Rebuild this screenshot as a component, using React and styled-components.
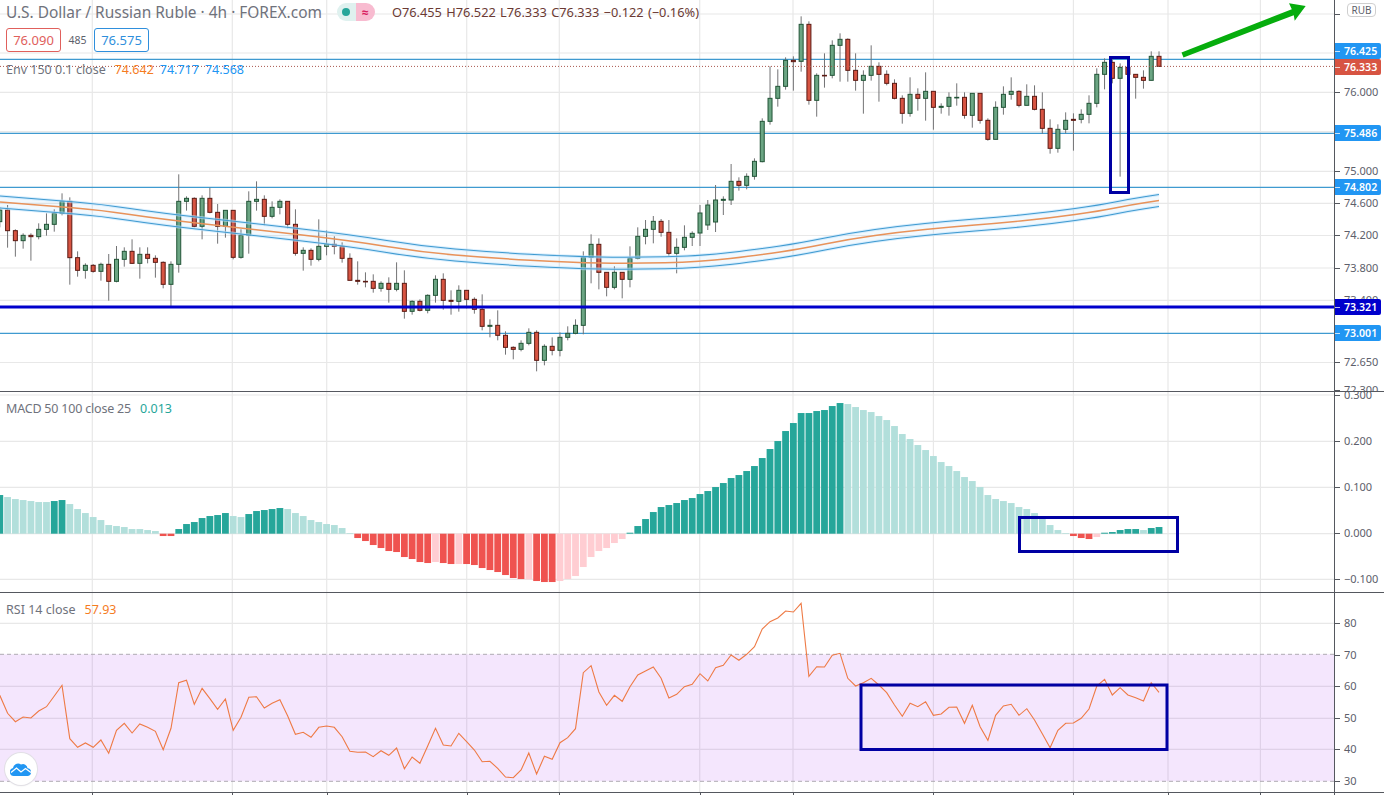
import React from 'react';
import styled, { createGlobalStyle } from 'styled-components';

const CHART_WIDTH = 1334;
const BAR_STEP = 7.78;
const barX = (i) => i * BAR_STEP - 0.2;

const verticalGrid = [92.3, 232.3, 326.7, 466.7, 559.3, 699.7, 793, 933.4, 1073.4, 1168, 1260.4];

// candles: [body top, body bottom, wick top, wick bottom, up], read off at 3x per block
const readCandles = (offset, rows) =>
  rows.map(([top, bottom, wickTop, wickBottom, up]) => ({
    top: offset + top / 3,
    bottom: offset + bottom / 3,
    wickTop: offset + wickTop / 3,
    wickBottom: offset + wickBottom / 3,
    up,
  }));

const candles = [
  ...readCandles(170, [
    [120, 155, 112, 172, 1], [120, 182, 105, 233, 0], [182, 212, 178, 260, 0], [196, 212, 190, 236, 1],
    [196, 200, 190, 272, 0], [178, 200, 160, 208, 1], [163, 178, 130, 197, 1], [130, 163, 118, 185, 1],
    [94, 130, 70, 136, 1], [94, 263, 82, 344, 0], [263, 301, 244, 320, 0], [286, 301, 280, 326, 1],
    [286, 304, 282, 308, 0], [283, 304, 278, 332, 1], [283, 334, 252, 392, 0], [268, 334, 228, 337, 1],
    [244, 268, 232, 290, 1], [244, 280, 208, 282, 0], [253, 280, 232, 326, 1], [253, 265, 232, 280, 0],
    [265, 277, 256, 323, 0], [277, 343, 274, 355, 0], [283, 343, 274, 408, 1], [94, 283, 13, 308, 1],
    [85, 94, 79, 122, 1], [85, 169, 82, 172, 0], [85, 169, 76, 208, 1], [85, 127, 53, 130, 0],
    [127, 169, 102, 221, 0], [121, 169, 121, 203, 1], [121, 262, 121, 268, 0], [196, 262, 178, 266, 1],
    [94, 196, 64, 251, 1], [88, 94, 34, 122, 1], [88, 139, 76, 166, 0], [112, 139, 94, 145, 1],
    [94, 112, 88, 133, 1], [94, 163, 94, 175, 0], [163, 250, 118, 257, 0], [241, 250, 232, 302, 1],
    [241, 268, 235, 287, 0], [229, 268, 148, 274, 1], [223, 229, 181, 256, 1], [223, 229, 199, 253, 0],
    [229, 265, 217, 278, 0],
  ]),
  ...readCandles(220, [
    [115, 181, 100, 181, 0], [181, 184, 124, 194, 0], [184, 185, 157, 202, 0], [184, 205, 163, 218, 0],
    [190, 205, 184, 215, 1], [190, 208, 172, 248, 0], [190, 208, 127, 214, 1], [190, 274, 151, 296, 0],
    [244, 274, 241, 284, 1], [244, 271, 238, 274, 0], [226, 271, 223, 280, 1], [178, 226, 166, 248, 1],
    [178, 241, 160, 269, 0], [241, 244, 211, 284, 0], [211, 244, 196, 275, 1], [211, 238, 211, 265, 0],
    [238, 268, 232, 281, 0], [268, 319, 223, 331, 0], [316, 319, 298, 352, 1], [316, 346, 271, 361, 0],
    [346, 382, 334, 404, 0], [382, 388, 379, 418, 0], [370, 388, 361, 394, 1], [337, 370, 325, 376, 1],
    [337, 421, 331, 454, 0], [379, 421, 373, 436, 1], [379, 391, 352, 406, 0], [352, 391, 337, 409, 1],
    [340, 352, 319, 361, 1], [316, 340, 298, 343, 1], [112, 316, 94, 343, 1], [73, 112, 43, 190, 1],
    [73, 157, 55, 208, 0], [157, 202, 157, 229, 0], [157, 202, 139, 208, 1], [157, 178, 157, 235, 0],
    [115, 178, 79, 202, 1], [49, 115, 22, 118, 1], [28, 49, 0, 73, 1], [4, 28, -12, 70, 1],
    [4, 37, -3, 50, 0], [37, 100, 0, 109, 0], [82, 100, 55, 160, 1], [52, 82, 16, 91, 1],
    [40, 52, 34, 78, 1],
  ]),
  ...readCandles(0, [
    [639, 699, 615, 738, 1], [615, 675, 600, 690, 1], [600, 666, 555, 696, 1],
  ]),
  ...readCandles(10, [
    [568, 571, 559, 615, 1], [514, 570, 462, 585, 1], [514, 526, 502, 542, 0], [499, 526, 490, 538, 1],
    [454, 499, 445, 509, 1], [334, 455, 325, 457, 1], [265, 334, 169, 344, 1], [229, 265, 178, 290, 1],
    [151, 229, 142, 239, 1], [151, 155, 139, 242, 0], [43, 154, 19, 185, 1], [43, 271, 34, 284, 0],
    [196, 271, 190, 320, 1], [196, 197, 130, 233, 0], [106, 196, 91, 205, 1], [88, 106, 70, 215, 1],
    [88, 181, 85, 215, 0], [181, 211, 130, 242, 0], [196, 211, 181, 311, 1], [169, 196, 106, 212, 1],
    [169, 193, 157, 275, 0], [193, 220, 181, 226, 0], [220, 265, 208, 268, 0], [265, 310, 256, 341, 0],
    [253, 310, 202, 320, 1], [253, 265, 235, 302, 0], [244, 265, 187, 332, 1], [244, 292, 244, 359, 0],
    [289, 292, 280, 311, 1], [262, 289, 247, 317, 1], [262, 263, 220, 287, 1], [262, 316, 247, 326, 0],
    [250, 316, 250, 353, 1], [250, 331, 250, 341, 0], [331, 388, 325, 392, 0], [292, 388, 274, 388, 1],
    [253, 292, 229, 314, 1], [244, 253, 202, 269, 1], [244, 286, 241, 292, 0], [259, 286, 223, 286, 1],
    [259, 298, 226, 301, 0], [298, 355, 247, 371, 0], [355, 415, 328, 431, 0], [358, 415, 343, 428, 1],
    [331, 358, 307, 370, 1], [328, 331, 310, 422, 0], [313, 328, 298, 340, 1], [280, 313, 256, 340, 1],
    [193, 280, 175, 292, 1],
  ]),
  ...readCandles(0, [
    [187, 223, 175, 268, 1], [187, 235, 175, 250, 0], [202, 235, 190, 530, 1], [202, 223, 200, 225, 0],
    [223, 232, 223, 296, 0], [232, 241, 211, 266, 0], [169, 241, 154, 241, 1], [169, 199, 154, 199, 0],
  ]),
];

const envelopeCenter = [
  [0, 202], [50, 206], [100, 210], [160, 219], [250, 229], [350, 240.5], [420, 252], [490, 258],
  [570, 262.5], [630, 263.5], [700, 262], [760, 255], [800, 249], [850, 239], [900, 232], [950, 227],
  [1000, 223], [1050, 218], [1100, 211], [1130, 205], [1159, 200.5],
];

// curve through the midpoints so the band has no kinks
const curveTo = (points, dy) => {
  const shifted = points.map(([x, y]) => [x, y + dy]);
  const segments = shifted.slice(1, -1).map(([x, y], i) => {
    const [nx, ny] = shifted[i + 2];
    return `Q${x} ${y} ${(x + nx) / 2} ${(y + ny) / 2}`;
  });
  const [lx, ly] = shifted[shifted.length - 1];
  return `${segments.join(' ')} L${lx} ${ly}`;
};
const envelopeLine = (dy) => `M${envelopeCenter[0][0]} ${envelopeCenter[0][1] + dy} ${curveTo(envelopeCenter, dy)}`;
const reversedCenter = [...envelopeCenter].reverse();
const envelopeFill = `${envelopeLine(-6)} L${reversedCenter[0][0]} ${reversedCenter[0][1] + 6} ${curveTo(reversedCenter, 6)} Z`;

// histogram tops at 3x, 416 is the zero line
const macdLevels = [
  300, 306, 312, 315, 318, 321, 321, 318, 315, 327, 342, 354, 366, 375, 390, 393, 396, 402, 402, 405,
  408, 423, 423, 402, 387, 381, 369, 363, 360, 354, 363, 366, 357, 348, 345, 342, 339, 342, 354, 363,
  375, 381, 387, 390, 399, 414, 429, 438, 450, 459, 468, 471, 486, 492, 501, 504, 501, 504, 507, 507,
  507, 510, 519, 525, 531, 540, 549, 552, 553, 558, 561, 561, 558, 552, 543, 516, 486, 468, 459, 444,
  432, 413, 393, 372, 351, 336, 330, 324, 315, 309, 297, 288, 276, 264, 249, 240, 228, 213, 189, 162,
  138, 108, 84, 54, 54, 48, 45, 33, 24, 27, 36, 45, 51, 63, 75, 93, 117, 132, 150, 165,
  183, 201, 213, 228, 246, 258, 276, 300, 312, 318, 324, 336, 342, 354, 366, 390, 405, 414, 423, 429,
  432, 426, 413, 411, 405, 402, 402, 405, 399, 396,
];
const fadedRanges = [[1, 6], [9, 20], [30, 31], [37, 45], [56, 56], [59, 59], [68, 68], [72, 80], [109, 137], [141, 141], [147, 147]];
const isFaded = (i) => fadedRanges.some(([from, to]) => i >= from && i <= to);

const rsiFirst = [
  316, 370, 395, 381, 384, 363, 350, 318, 286, 446, 472, 459, 472, 450, 490, 421, 400, 429, 402, 412,
  424, 479, 415, 278, 271, 343, 295, 326, 358, 327, 421, 382, 322, 320, 354, 340, 329, 378, 433, 427,
  442, 412, 408, 412, 440, 484, 487, 486, 500, 482, 496, 474, 536, 501, 520, 468, 415, 465, 468, 430,
  455, 480, 515, 514, 535, 561, 563, 540, 489, 552, 499, 508, 458, 443, 416, 248, 227, 306, 346, 316,
  334, 290, 255, 243, 231, 265, 324, 313, 290, 283, 251, 273, 233, 226, 195, 211, 193, 170, 117, 95,
  84, 63, 66, 40, 259, 230, 231, 196, 190, 265,
];
const rsiLast = [
  138, 128, 115, 135, 158, 195, 229, 190, 200, 185, 226, 222, 202, 201, 250, 196, 260, 301, 226, 198,
  193, 226, 206, 240, 281, 323, 271, 250, 249, 235, 207, 138, 118, 165, 143, 165, 173, 183, 128, 157,
];
const rsiPoints = [...rsiFirst.map((v) => 590 + v / 3), ...rsiLast.map((v) => 640 + v / 3)]
  .map((y, i) => `${barX(i).toFixed(1)},${y.toFixed(1)}`)
  .join(' ');

const mainTicks = [
  { y: 14, text: '' }, { y: 92, text: '76.000' }, { y: 171, text: '75.000' }, { y: 203, text: '74.600' },
  { y: 235, text: '74.200' }, { y: 267.5, text: '73.800' }, { y: 299.5, text: '73.400' }, { y: 362, text: '72.650' },
  { y: 390, text: '72.300' },
];
const mainTags = [
  { y: 50.7, text: '76.425', color: '#2196f3' }, { y: 66.7, text: '76.333', color: '#d75442' },
  { y: 133.2, text: '75.486', color: '#2196f3' }, { y: 187.3, text: '74.802', color: '#2196f3' },
  { y: 307.3, text: '73.321', color: '#0000cc' }, { y: 333.4, text: '73.001', color: '#2196f3' },
];
const macdTicks = [
  { y: 3, text: '0.300' }, { y: 49, text: '0.200' }, { y: 95, text: '0.100' },
  { y: 141, text: '0.000' }, { y: 187, text: '\u22120.100' },
];
const rsiTicks = [
  { y: 30.3, text: '80' }, { y: 61.5, text: '70' }, { y: 93.3, text: '60' },
  { y: 125.3, text: '50' }, { y: 156.3, text: '40' }, { y: 188.3, text: '30' },
];

const GlobalStyle = createGlobalStyle`
  html, body {
    margin: 0;
    padding: 0;
    background: #fff;
  }
`;

const Page = styled.div`
  width: 1384px;
  height: 795px;
  overflow: hidden;
  display: flex;
  flex-direction: column;
  background: #fff;
  color: #5d606b;
  font-family: 'Noto Sans', 'Open Sans', sans-serif;
`;

const Pane = styled.section`
  height: ${(p) => p.$height}px;
  flex: none;
  display: flex;
  border-bottom: 1px solid #55585f;
  box-sizing: border-box;
`;

const Chart = styled.div`
  position: relative;
  width: ${CHART_WIDTH}px;
  flex: none;
  overflow: hidden;
`;

const ChartSvg = styled.svg`
  display: block;
  width: 100%;
  height: 100%;
`;

const PriceAxis = styled.div`
  position: relative;
  flex: 1;
  border-left: 1px solid #55585f;
  overflow: hidden;
`;

const Tick = styled.span`
  position: absolute;
  left: 9px;
  line-height: 16px;
  font-size: 11px;
  color: #5d606b;
  transform: translateY(-8px);

  &::before {
    content: '';
    position: absolute;
    left: -9px;
    top: 8px;
    width: 5px;
    height: 1px;
    background: #55585f;
  }
`;

const PriceTag = styled.span`
  position: absolute;
  left: 0;
  width: 46px;
  height: 16px;
  padding-left: 9px;
  box-sizing: border-box;
  line-height: 16px;
  font-size: 10.6px;
  font-weight: 600;
  color: #fff;
  background: ${(p) => p.$color};
  border-radius: 0 2px 2px 0;
  transform: translateY(-8px);

  &::before {
    content: '';
    position: absolute;
    left: 0;
    top: 8px;
    width: 5px;
    height: 1px;
    background: rgba(255, 255, 255, 0.75);
  }
`;

const CurrencyBadge = styled.span`
  position: absolute;
  top: 3px;
  left: 12px;
  width: 29px;
  height: 14px;
  box-sizing: border-box;
  border: 1px solid #cfcfcf;
  border-radius: 4px;
  background: #fff;
  font-size: 10px;
  line-height: 12px;
  text-align: center;
  color: #5d606b;
`;

const Legend = styled.div`
  position: absolute;
  top: 3px;
  left: 6px;
  display: flex;
  flex-direction: column;
`;

const TitleRow = styled.div`
  display: flex;
  align-items: center;
  height: 18px;
`;

const Title = styled.span`
  font-size: 15.45px;
  color: #6f727c;
  white-space: nowrap;
`;

const Status = styled.div`
  display: flex;
  width: 38px;
  height: 18px;
  margin-left: 15px;
  border-radius: 9px;
  overflow: hidden;
`;

const StatusPart = styled.span`
  flex: 1;
  display: flex;
  align-items: center;
  justify-content: center;
  background: ${(p) => p.$bg};
  color: ${(p) => p.$color};
  font-size: 12px;
  font-weight: 700;
`;

const StatusDot = styled.i`
  width: 8px;
  height: 8px;
  border-radius: 50%;
  background: #26a69a;
`;

const Ohlc = styled.span`
  margin-left: 17px;
  font-size: 12.8px;
  color: #6b3a34;
  white-space: nowrap;
  word-spacing: 1px;
`;

const QuoteRow = styled.div`
  display: flex;
  align-items: center;
  height: 24px;
  margin-top: 7px;
`;

const QuoteBox = styled.span`
  width: 55px;
  height: 24px;
  box-sizing: border-box;
  border: 1px solid ${(p) => p.$color};
  border-radius: 3px;
  background: #fff;
  color: ${(p) => p.$color};
  font-size: 13px;
  line-height: 22px;
  text-align: center;
`;

const Spread = styled.span`
  width: 33px;
  text-align: center;
  font-size: 10.5px;
  color: #5d606b;
`;

const StudyRow = styled.div`
  display: flex;
  align-items: center;
  gap: ${(p) => p.$gap || 6}px;
  height: 18px;
  margin-top: ${(p) => p.$top || 0}px;
  font-size: 12.5px;
  color: #6f727c;
  white-space: nowrap;
`;

const StudyName = styled.span`
  letter-spacing: ${(p) => p.$tracking || 0}px;
`;

const StudyValue = styled.span`
  color: ${(p) => p.$color};
  margin-left: ${(p) => p.$left || 0}px;
`;

const StudyLegend = styled.div`
  position: absolute;
  top: 7px;
  left: 6px;
`;

const Logo = styled.div`
  position: absolute;
  left: 5px;
  bottom: 7px;
  width: 32px;
  height: 32px;
  border-radius: 50%;
  background: #fff;
  box-shadow: 0 0 0 1px #e2e0e6, 0 1px 2px rgba(0, 0, 0, 0.08);
  display: flex;
  align-items: center;
  justify-content: center;
`;

const TimeAxis = styled.div`
  position: relative;
  flex: 1;
  width: ${CHART_WIDTH}px;
`;

const TimeTick = styled.i`
  position: absolute;
  top: 0;
  bottom: 0;
  width: 1px;
  background: #55585f;
`;

const Grid = ({ from, to, rows }) => (
  <g stroke="#e8e8e8" strokeWidth="1.2">
    {verticalGrid.map((x) => (
      <line key={x} x1={x} x2={x} y1={from} y2={to} />
    ))}
    {rows.map((y) => (
      <line key={y} x1="0" x2={CHART_WIDTH} y1={y} y2={y} />
    ))}
  </g>
);

const Candle = ({ x, top, bottom, wickTop, wickBottom, up }) => (
  <g>
    <line x1={x} x2={x} y1={wickTop} y2={wickBottom} stroke="#737375" />
    <rect
      x={x - 2}
      y={top}
      width="4"
      height={Math.max(bottom - top, 0.6)}
      fill={up ? '#6ba583' : '#d75442'}
      stroke={up ? '#225437' : '#5b1a13'}
    />
  </g>
);

const Frame = ({ x, y, width, height }) => (
  <rect x={x} y={y} width={width} height={height} fill="none" stroke="#0000a3" strokeWidth="3" />
);

const MainChart = () => (
  <ChartSvg viewBox={`0 0 ${CHART_WIDTH} 391`}>
    <Grid from={0} to={391} rows={[14, 53, 92.3, 131.7, 171.3, 203.3, 235.5, 268, 300.3, 362.5]} />
    <g fill="none" strokeWidth="1.2">
      <line x1="0" x2={CHART_WIDTH} y1="59.3" y2="59.3" stroke="#3f9ad0" />
      <line x1="0" x2={CHART_WIDTH} y1="133.3" y2="133.3" stroke="#3f9ad0" />
      <line x1="0" x2={CHART_WIDTH} y1="187.3" y2="187.3" stroke="#3f9ad0" />
      <line x1="0" x2={CHART_WIDTH} y1="333.4" y2="333.4" stroke="#3f9ad0" />
    </g>
    {candles.map((candle, i) => (
      <Candle key={i} x={barX(i)} {...candle} />
    ))}
    <path d={envelopeFill} fill="rgba(33,150,243,0.06)" />
    <g fill="none">
      <path d={envelopeLine(-6)} stroke="#bfe3fb" strokeWidth="3" opacity="0.6" />
      <path d={envelopeLine(6)} stroke="#bfe3fb" strokeWidth="3" opacity="0.6" />
      <path d={envelopeLine(-6)} stroke="#3f9ad0" strokeWidth="1.1" />
      <path d={envelopeLine(6)} stroke="#3f9ad0" strokeWidth="1.1" />
      <path d={envelopeLine(0)} stroke="#e8925a" strokeWidth="1.4" />
    </g>
    <line x1="0" x2={CHART_WIDTH} y1="66.4" y2="66.4" stroke="#a8574d" strokeWidth="1" strokeDasharray="1 2" />
    <line x1="0" x2={CHART_WIDTH} y1="307" y2="307" stroke="#0000cc" strokeWidth="3" />
    <Frame x={1110.5} y={57.5} width={18} height={135} />
    <polygon
      points="1181.5,52.500 1183.500,57.500 1293.800,15.200 1294.700,20.700 1305.700,6 1289,3.300 1291.800,9.300"
      fill="#06ad0d"
    />
  </ChartSvg>
);

const MacdChart = () => (
  <ChartSvg viewBox={`0 392 ${CHART_WIDTH} 200`}>
    <Grid from={392} to={592} rows={[395, 441.3, 487.3, 533.7, 579.3]} />
    {macdLevels.map((level, i) => {
      const height = Math.abs(level - 416) / 3;
      const positive = level < 416;
      const color = positive
        ? isFaded(i) ? '#b2dfdb' : '#26a69a'
        : isFaded(i) ? '#ffcdd2' : '#ef5350';
      return (
        <rect
          key={i}
          x={barX(i) - 3.4}
          y={positive ? 533.7 - height : 533.7}
          width="6.8"
          height={height}
          fill={color}
        />
      );
    })}
    <Frame x={1019.5} y={517.5} width={158} height={34} />
  </ChartSvg>
);

const RsiChart = () => (
  <ChartSvg viewBox={`0 593 ${CHART_WIDTH} 199`}>
    <Grid from={593} to={792} rows={[623.3, 686.3, 718.3, 749.3]} />
    <rect x="0" y="654.3" width={CHART_WIDTH} height="127" fill="rgba(145,5,235,0.1)" />
    <g stroke="#aeaab2" strokeWidth="1" strokeDasharray="4 3">
      <line x1="0" x2={CHART_WIDTH} y1="654.3" y2="654.3" />
      <line x1="0" x2={CHART_WIDTH} y1="781.3" y2="781.3" />
    </g>
    <polyline points={rsiPoints} fill="none" stroke="#ee7a45" strokeWidth="1.1" />
    <Frame x={861} y={685} width={306} height={64.5} />
  </ChartSvg>
);

const LogoMark = () => (
  <svg width="22" height="14" viewBox="0 0 22 14">
    <path
      d="M4 14a4 4 0 0 1-1-7.900A5 5 0 0 1 11 2.500a4.500 4.500 0 0 1 6.500 3.800 3.900 3.900 0 0 1 .5 7.700z"
      fill="#2196f3"
    />
    <polyline points="1,10.500 6.500,6 11,10 15.500,6.500 21,10.500" fill="none" stroke="#fff" strokeWidth="1.300" />
  </svg>
);

const App = () => (
  <Page>
    <GlobalStyle />
    <Pane $height={392}>
      <Chart>
        <MainChart />
        <Legend>
          <TitleRow>
            <Title>U.S. Dollar / Russian Ruble · 4h · FOREX.com</Title>
            <Status>
              <StatusPart $bg="#dff1ef" $color="#26a69a"><StatusDot /></StatusPart>
              <StatusPart $bg="#f8bbd0" $color="#d81b60">≈</StatusPart>
            </Status>
            <Ohlc>O76.455 H76.522 L76.333 C76.333 −0.122 (−0.16%)</Ohlc>
          </TitleRow>
          <QuoteRow>
            <QuoteBox $color="#e0605c">76.090</QuoteBox>
            <Spread>485</Spread>
            <QuoteBox $color="#2f8fdc">76.575</QuoteBox>
          </QuoteRow>
          <StudyRow $top={8}>
            <StudyName>Env 150 0.1 close</StudyName>
            <StudyValue $color="#f57c1f" $left={3}>74.642</StudyValue>
            <StudyValue $color="#2196f3">74.717</StudyValue>
            <StudyValue $color="#2196f3">74.568</StudyValue>
          </StudyRow>
        </Legend>
      </Chart>
      <PriceAxis>
        {mainTicks.map((tick) => (
          <Tick key={tick.y} style={{ top: tick.y }}>{tick.text}</Tick>
        ))}
        <CurrencyBadge>RUB</CurrencyBadge>
        {mainTags.map((tag) => (
          <PriceTag key={tag.text} $color={tag.color} style={{ top: tag.y }}>{tag.text}</PriceTag>
        ))}
      </PriceAxis>
    </Pane>

    <Pane $height={201}>
      <Chart>
        <MacdChart />
        <StudyLegend>
          <StudyRow $gap={9}>
            <StudyName $tracking={-0.2}>MACD 50 100 close 25</StudyName>
            <StudyValue $color="#26a69a">0.013</StudyValue>
          </StudyRow>
        </StudyLegend>
      </Chart>
      <PriceAxis>
        {macdTicks.map((tick) => (
          <Tick key={tick.text} style={{ top: tick.y }}>{tick.text}</Tick>
        ))}
      </PriceAxis>
    </Pane>

    <Pane $height={200}>
      <Chart>
        <RsiChart />
        <StudyLegend>
          <StudyRow $gap={9}>
            <StudyName>RSI 14 close</StudyName>
            <StudyValue $color="#f57c1f">57.93</StudyValue>
          </StudyRow>
        </StudyLegend>
        <Logo><LogoMark /></Logo>
      </Chart>
      <PriceAxis>
        {rsiTicks.map((tick) => (
          <Tick key={tick.text} style={{ top: tick.y }}>{tick.text}</Tick>
        ))}
      </PriceAxis>
    </Pane>

    <TimeAxis>
      {[...verticalGrid, 1334].map((x) => (
        <TimeTick key={x} style={{ left: x }} />
      ))}
    </TimeAxis>
  </Page>
);

export default App;
